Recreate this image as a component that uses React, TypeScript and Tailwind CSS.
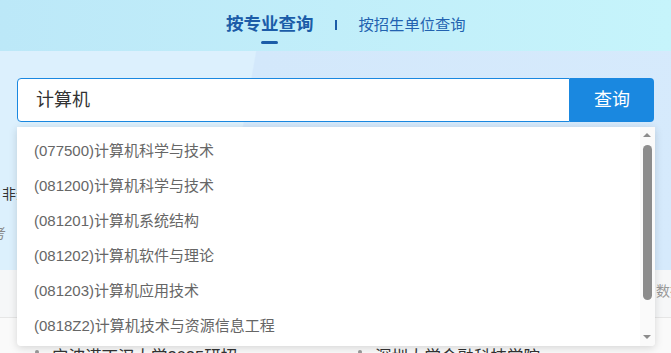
import React from 'react'

const suggestions = [
    '(077500)计算机科学与技术',
    '(081200)计算机科学与技术',
    '(081201)计算机系统结构',
    '(081202)计算机软件与理论',
    '(081203)计算机应用技术',
    '(0818Z2)计算机技术与资源信息工程',
]

export default function App() {
    return (
        <div className="relative w-[671px] h-[353px] overflow-hidden bg-[#fafafa] font-['Liberation_Sans','Noto_Sans_CJK_SC',sans-serif]">

            {/* ── 顶部切换 ── */}
            <div className="h-[51px] flex items-start pl-[226px] bg-gradient-to-r from-[#bce8f8] to-[#c6f4fb]">
                <div className="flex flex-col items-center pt-[13px]">
                    <span className="text-[17.5px] leading-[22px] font-bold text-[#1b5ca8]">按专业查询</span>
                    <div className="mt-[6px] w-[17px] h-[3px] rounded-full bg-[#1b5ca8]" />
                </div>
                <div className="ml-[21px] mt-[20px] w-[2px] h-[10px] bg-[#1b5ca8]" />
                <span className="ml-[22px] mt-[16px] text-[15.3px] leading-[18px] text-[#2262b0]">按招生单位查询</span>
            </div>

            {/* ── 搜索区 ── */}
            <div className="h-[219px] bg-[#d5eafc] bg-[linear-gradient(100deg,#dcf0fd_0%,#dcf0fd_36%,#d3e8fb_36.2%,#d6eafc_100%)] pt-[27px]">
                <div className="mx-[17px] flex h-[44px]">
                    <div className="flex-1 flex items-center pl-[18px] bg-white border border-[#1a88e0] rounded-l-[4px]">
                        <span className="text-[18px] text-[#333]">计算机</span>
                    </div>
                    <button className="w-[84px] bg-[#1a88e0] text-white text-[18px] rounded-r-[4px]">查询</button>
                </div>
                <div className="mt-[62px] pl-[2px] text-[14px] text-[#333]">非全日制</div>
                <div className="mt-[18px] ml-[-22px] text-[14px] text-[#888]">参考</div>
            </div>

            {/* ── 下方列表 ── */}
            <div className="h-[48px] bg-[#f6f7f8] border-b border-[#e6e6e6] flex items-center justify-end">
                <span className="mr-[-13px] mb-[4px] text-[14px] text-[#999]">数据</span>
            </div>
            <div className="flex pt-[27px] bg-[#fafafa]">
                <div className="w-[343px] flex items-start pl-[35px]">
                    <div className="mt-[5px] w-[4px] h-[4px] rounded-full bg-[#999]" />
                    <span className="ml-[13px] text-[16.5px] text-[#333]">宁波诺丁汉大学2025研招</span>
                </div>
                <div className="flex items-start pl-[15px]">
                    <div className="mt-[5px] w-[4px] h-[4px] rounded-full bg-[#999]" />
                    <span className="ml-[13px] text-[16.5px] text-[#333]">深圳大学金融科技学院</span>
                </div>
            </div>

            {/* ── 下拉建议 ── */}
            <div className="absolute left-[17px] top-[127px] w-[638px] h-[219px] bg-white rounded-b-[4px] shadow-[0_2px_8px_rgba(0,0,0,0.15)] flex overflow-hidden">
                <ul className="flex-1 pt-[7px]">
                    {suggestions.map((s) => (
                        <li key={s} className="h-[35px] flex items-center pl-[17px] text-[15px] text-[#666]">
                            {s}
                        </li>
                    ))}
                </ul>
                <div className="w-[15px] bg-[#fafafa] relative">
                    <div className="absolute left-[3px] top-[6px] w-0 h-0 border-x-[4px] border-x-transparent border-b-[4px] border-b-[#8c8c8c]" />
                    <div className="absolute left-[3px] top-[18px] w-[9px] h-[155px] rounded-full bg-[#8c8c8c]" />
                    <div className="absolute left-[3px] bottom-[7px] w-0 h-0 border-x-[4px] border-x-transparent border-t-[4px] border-t-[#8c8c8c]" />
                </div>
            </div>
        </div>
    )
}
